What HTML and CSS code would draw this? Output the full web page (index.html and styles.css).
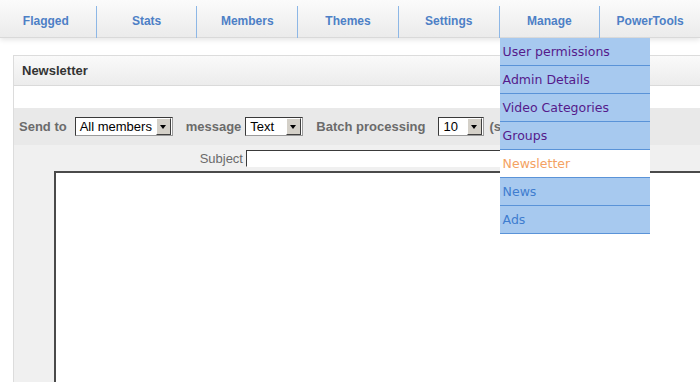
FILE: index.html
```html
<!DOCTYPE html>
<html lang="en">
<head>
    <meta charset="UTF-8">
    <title>Newsletter</title>
    <link rel="stylesheet" href="styles.css">
</head>
<body>
    <!-- Barra de navegación principal -->
    <div class="topnav">
        <ul class="menu">
            <li><a href="#">Flagged</a></li>
            <li><a href="#">Stats</a></li>
            <li><a href="#">Members</a></li>
            <li><a href="#">Themes</a></li>
            <li><a href="#">Settings</a></li>
            <li><a href="#">Manage</a>
                <ul class="submenu">
                    <li><a href="#" class="visited">User permissions</a></li>
                    <li><a href="#" class="visited">Admin Details</a></li>
                    <li><a href="#" class="visited">Video Categories</a></li>
                    <li><a href="#" class="visited">Groups</a></li>
                    <li class="current"><a href="#">Newsletter</a></li>
                    <li><a href="#">News</a></li>
                    <li><a href="#">Ads</a></li>
                </ul>
            </li>
            <li><a href="#">PowerTools</a></li>
        </ul>
    </div>

    <div class="panel">
        <div class="panel-head">Newsletter</div>
        <div class="panel-gap"></div>

        <form class="mail-form" action="#" method="post">
            <div class="options-row">
                <span class="opt-label">Send to</span>
                <span class="fake-select w-members">All members<span class="arrow"></span></span>
                <span class="opt-label tight">message</span>
                <span class="fake-select w-type">Text<span class="arrow"></span></span>
                <span class="opt-label wide">Batch processing</span>
                <span class="fake-select w-batch">10<span class="arrow"></span></span>
                <span class="opt-label note">(sec)</span>
            </div>

            <div class="subject-row">
                <label class="subject-label" for="subject">Subject</label>
                <input type="text" id="subject" name="subject" class="subject-input">
            </div>

            <div class="body-row">
                <textarea name="body" class="mail-body"></textarea>
            </div>
        </form>
    </div>
</body>
</html>
```

FILE: styles.css
```css
html, body {
    margin: 0;
    height: 100%;
    overflow: hidden;
}
body {
    font-family: "Liberation Sans", Arial, sans-serif;
    background-color: #fff;
    color: #333;
}

/* Barra superior */
.topnav {
    height: 37px;
    background: linear-gradient(#fbfbfb, #ebebeb);
    box-shadow: 0 1px 0 #d9d9d9, 0 3px 5px rgba(0, 0, 0, 0.1);
    position: relative;
    z-index: 2;
}
.menu {
    display: flex;
    list-style: none;
    margin: 0 0 0 -4px;
    padding: 6px 0 0;
}
.menu > li {
    width: 100px;
    border-left: 1px solid #8db7e6;
    position: relative;
    text-align: center;
    line-height: 28px;
    padding-bottom: 3px;
}
.menu > li:first-child {
    width: 100px;
    border-left: none;
}
.menu > li > a {
    font-size: 12px;
    font-weight: bold;
    color: #4d80c6;
    text-decoration: none;
}

/* Menú desplegable */
.submenu {
    position: absolute;
    top: 100%;
    left: 0;
    width: 150px;
    list-style: none;
    margin: 0;
    padding: 0;
    background-color: #a7c9ef;
    text-align: left;
}
.submenu li {
    height: 27px;
    line-height: 27px;
    border-bottom: 1px solid #5a93d8;
}
.submenu a {
    display: block;
    padding-left: 3px;
    font-family: "DejaVu Sans", Verdana, sans-serif;
    font-size: 12.5px;
    color: #3f7dcf;
    text-decoration: none;
}
.submenu a.visited {
    color: #551a8b;
}
.submenu li.current {
    background-color: #fff;
}
.submenu li.current a {
    color: #f4a262;
}

/* Panel */
.panel {
    width: 800px;
    margin: 18px 0 0 13px;
    border: 1px solid #dcdcdc;
    border-right: none;
    background-color: #fff;
}
.panel-head {
    height: 29px;
    line-height: 29px;
    padding-left: 8px;
    font-size: 13px;
    font-weight: bold;
    color: #333;
    background: linear-gradient(#fafafa, #ececec);
    border-bottom: 1px solid #dadada;
}
.panel-gap {
    height: 22px;
}

.options-row {
    display: flex;
    align-items: center;
    height: 37px;
    padding-left: 5px;
    background-color: #e9e9e9;
}
.opt-label {
    font-size: 13px;
    font-weight: bold;
    color: #6b6b6b;
    margin-right: 8px;
    white-space: nowrap;
}
.opt-label.tight {
    margin-right: 4px;
}
.opt-label.wide {
    margin-right: 13px;
}
.opt-label.note {
    margin-left: -8px;
}
.fake-select {
    display: inline-flex;
    align-items: center;
    justify-content: space-between;
    box-sizing: border-box;
    height: 19px;
    margin-right: 13px;
    padding-left: 4px;
    border: 1px solid;
    border-color: #3a3a3a #9a9a9a #9a9a9a #3a3a3a;
    background-color: #fff;
    font-size: 13px;
    color: #000;
}
.w-members { width: 98px; }
.w-type { width: 58px; }
.w-batch { width: 46px; }
.fake-select .arrow {
    position: relative;
    width: 13px;
    height: 15px;
    margin-right: 1px;
    background-color: #d4d0c8;
    border: 1px solid;
    border-color: #fff #404040 #404040 #fff;
}
.fake-select .arrow::after {
    content: "";
    position: absolute;
    left: 3px;
    top: 6px;
    border-left: 3.5px solid transparent;
    border-right: 3.5px solid transparent;
    border-top: 4px solid #000;
}

.subject-row {
    display: flex;
    box-sizing: border-box;
    height: 26px;
    padding-top: 5px;
    background-color: #f0f0f0;
}
.subject-label {
    width: 229px;
    padding-right: 3px;
    text-align: right;
    font-size: 13px;
    line-height: 17px;
    color: #6b6b6b;
}
.subject-input {
    width: 400px;
    height: 17px;
    box-sizing: border-box;
    margin: 0;
    border: 1px solid;
    border-color: #3a3a3a #e4e4e4 #fff #3a3a3a;
}

.body-row {
    height: 260px;
    padding-left: 40px;
    background-color: #f0f0f0;
}
.mail-body {
    display: block;
    width: 760px;
    height: 260px;
    box-sizing: border-box;
    margin: 0;
    border: 2px solid;
    border-color: #4a4a4a #d4d0c8 #d4d0c8 #4a4a4a;
    resize: none;
}
```
